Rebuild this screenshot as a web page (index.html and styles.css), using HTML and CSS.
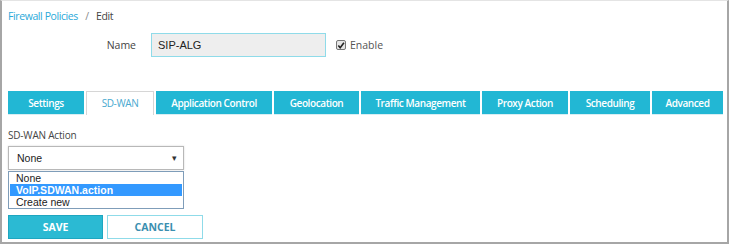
FILE: index.html
```html
<!DOCTYPE html>
<html>
<head>
    <title>Firewall Policies - Edit</title>
    <meta charset="utf-8">
    <link rel="stylesheet" href="styles.css">
</head>
<body>
    <div class="frame">
        <div class="breadcrumb">
            <a href="#">Firewall Policies</a>
            <span class="sep">/</span>
            <span>Edit</span>
        </div>

        <div class="name-row">
            <label class="name-label" for="policy-name">Name</label>
            <input class="name-input" id="policy-name" type="text" value="SIP-ALG">
            <label class="enable">
                <span class="check">
                    <svg width="9" height="9" viewBox="0 0 9 9"><path d="M1.5 4.5 L3.6 7 L7.8 1.5" fill="none" stroke="#222" stroke-width="1.8"/></svg>
                </span>
                Enable
            </label>
        </div>

        <ul class="tabs">
            <li class="tab w-settings">Settings</li>
            <li class="tab w-sdwan active">SD-WAN</li>
            <li class="tab w-app">Application Control</li>
            <li class="tab w-geo">Geolocation</li>
            <li class="tab w-traffic">Traffic Management</li>
            <li class="tab w-proxy">Proxy Action</li>
            <li class="tab w-sched">Scheduling</li>
            <li class="tab w-adv">Advanced</li>
        </ul>

        <div class="section">
            <div class="field-label">SD-WAN Action</div>
            <div class="select">
                <span>None</span>
                <span class="arrow">&#9662;</span>
            </div>
            <ul class="options">
                <li>None</li>
                <li class="selected">VoIP.SDWAN.action</li>
                <li>Create new</li>
            </ul>
        </div>

        <div class="buttons">
            <button class="btn save">SAVE</button>
            <button class="btn cancel">CANCEL</button>
        </div>
    </div>
</body>
</html>
```

FILE: styles.css
```css
html, body {
    margin: 0;
    padding: 0;
    background-color: white;
}
.frame {
    box-sizing: border-box;
    width: 729px;
    height: 244px;
    border-left: 2px solid #a6a6a6;
    border-right: 2px solid #a6a6a6;
    border-bottom: 2px solid #a6a6a6;
    border-top: 1px solid #e4e4e4;
    padding: 0 0 0 6px;
    font-family: "Open Sans", "Liberation Sans", Arial, sans-serif;
    font-size: 10px;
    color: #444;
}
.breadcrumb {
    height: 16px;
    line-height: 16px;
    padding-top: 7px;
    font-size: 10.5px;
    letter-spacing: -0.4px;
}
.breadcrumb a {
    color: #2aa9d9;
    text-decoration: none;
}
.breadcrumb .sep {
    color: #888;
    margin: 0 5px;
}
.name-row {
    display: flex;
    align-items: center;
    margin-top: 9px;
    height: 24px;
}
.name-label {
    width: 128px;
    text-align: right;
    box-sizing: border-box;
    font-size: 10.5px;
    color: #444;
}
.name-input {
    box-sizing: border-box;
    width: 175px;
    height: 24px;
    margin: 0 0 0 15px;
    padding: 0 6px;
    border: 1px solid #8fdbe9;
    background-color: #eeeeee;
    font-family: "Liberation Sans", Arial, sans-serif;
    font-size: 11px;
    color: #222;
    outline: none;
}
.enable {
    display: flex;
    align-items: center;
    margin-left: 10px;
    font-size: 10.5px;
    color: #555;
}
.check {
    box-sizing: border-box;
    width: 10px;
    height: 10px;
    border: 1px solid #777;
    border-radius: 2px;
    background-color: #e6e6e6;
    margin-right: 4px;
    display: flex;
    align-items: center;
    justify-content: center;
}
.tabs {
    list-style: none;
    display: flex;
    gap: 2px;
    margin: 34px 0 0 0;
    padding: 0;
    height: 24px;
}
.tab {
    box-sizing: border-box;
    height: 24px;
    line-height: 24px;
    text-align: center;
    background-color: #22b7d4;
    color: white;
    font-weight: 600;
    font-size: 10px;
    letter-spacing: -0.4px;
    border-bottom: 1px solid #d8eef3;
}
.tab.active {
    background-color: white;
    color: #49a9cf;
    font-weight: 400;
    border: 1px solid #d6d6d6;
    border-bottom: none;
    line-height: 22px;
}
.w-settings { width: 76px; }
.w-sdwan { width: 68px; }
.w-app { width: 116px; }
.w-geo { width: 85px; }
.w-traffic { width: 119px; }
.w-proxy { width: 86px; }
.w-sched { width: 80px; }
.w-adv { width: 71px; }
.section {
    margin-top: 12px;
}
.field-label {
    height: 16px;
    line-height: 16px;
    letter-spacing: -0.2px;
    color: #444;
}
.select {
    box-sizing: border-box;
    width: 176px;
    height: 24px;
    margin-top: 3px;
    padding: 0 6px 0 8px;
    border: 1px solid #b8b8b8;
    box-shadow: 0 0 2px rgba(0,0,0,0.15);
    display: flex;
    align-items: center;
    justify-content: space-between;
    font-family: "Liberation Sans", Arial, sans-serif;
    font-size: 10.5px;
    color: #222;
}
.arrow {
    font-size: 9px;
    color: #333;
}
.options {
    list-style: none;
    box-sizing: border-box;
    width: 176px;
    margin: 1px 0 0 0;
    padding: 0;
    border: 1px solid #7f9db9;
    font-family: "Liberation Sans", Arial, sans-serif;
    font-size: 10.5px;
    color: #222;
}
.options li {
    height: 12px;
    line-height: 12px;
    padding-left: 7px;
}
.options li.selected {
    background-color: #3399ff;
    color: white;
    font-weight: bold;
    height: 12px;
    line-height: 12px;
    margin: 0 1px;
    padding-left: 6px;
}
.buttons {
    display: flex;
    gap: 4px;
    margin-top: 6px;
}
.btn {
    box-sizing: border-box;
    width: 95px;
    height: 24px;
    font-family: "Open Sans", "Liberation Sans", Arial, sans-serif;
    font-size: 10.5px;
    font-weight: 700;
    cursor: pointer;
}
.save {
    background-color: #2bbad3;
    border: 1px solid #1ea6c0;
    color: white;
}
.cancel {
    width: 96px;
    background-color: white;
    border: 1px solid #8fdbe9;
    color: #3b8fb0;
}
```
